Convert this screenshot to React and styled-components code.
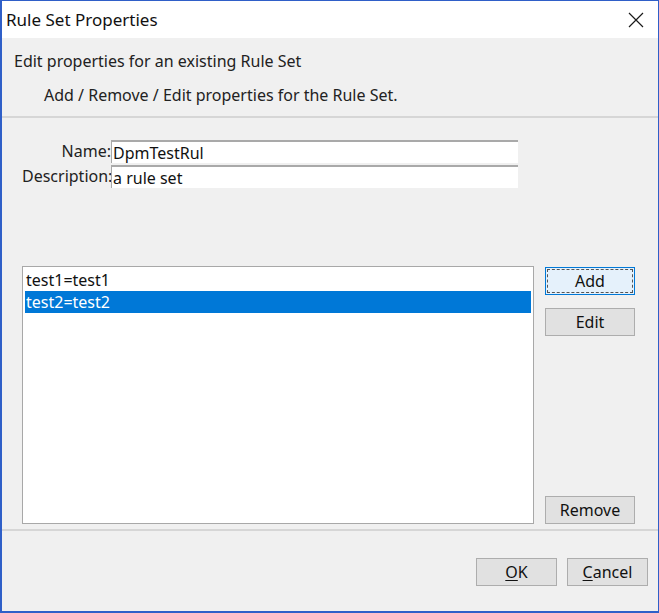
import React from "react";
import styled, { createGlobalStyle } from "styled-components";

const GlobalStyle = createGlobalStyle`
  html, body {
    margin: 0;
    padding: 0;
    background: #ffffff;
  }
  * {
    box-sizing: border-box;
  }
`;

const rules = [
  { id: 1, text: "test1=test1" },
  { id: 2, text: "test2=test2" },
];

function App() {
  return (
    <>
      <GlobalStyle />
      <Window>
        <TitleBar>
          <Title>Rule Set Properties</Title>
          <CloseBtn aria-label="close">
            <svg width="16" height="16" viewBox="0 0 16 16">
              <path d="M1 1 L15 15 M15 1 L1 15" stroke="#1a1a1a" strokeWidth="1.2" fill="none" />
            </svg>
          </CloseBtn>
        </TitleBar>

        <Header>
          <HeadLine>Edit properties for an existing Rule Set</HeadLine>
          <SubLine>Add / Remove / Edit properties for the Rule Set.</SubLine>
        </Header>

        <Main>
          <Form>
            <Label>Name:</Label>
            <Field defaultValue="DpmTestRul" />
            <Label>Description:</Label>
            <Field defaultValue="a rule set" />
          </Form>

          <ListArea>
            <ListBox>
              {rules.map((r) => (
                <ListItem key={r.id} selected={r.id === 2}>
                  {r.text}
                </ListItem>
              ))}
            </ListBox>
            <SideButtons>
              <Button focused>Add</Button>
              <Button>Edit</Button>
              <Spacer />
              <Button>Remove</Button>
            </SideButtons>
          </ListArea>
        </Main>

        <Footer>
          <Button wide>
            <u>O</u>K
          </Button>
          <Button wide>
            <u>C</u>ancel
          </Button>
        </Footer>
      </Window>
    </>
  );
}

export default App;

const Window = styled.div`
  width: 659px;
  height: 613px;
  display: flex;
  flex-direction: column;
  border: 1px solid #2f5fc8;
  border-left-width: 2px;
  border-bottom-width: 2px;
  background: #f0f0f0;
  font-family: "Noto Sans", "Open Sans", sans-serif;
  font-size: 16px;
  color: #222;
`;

const TitleBar = styled.div`
  height: 37px;
  display: flex;
  align-items: center;
  justify-content: space-between;
  background: #ffffff;
  padding-left: 4px;
  padding-right: 12px;
`;

const Title = styled.div`
  font-size: 17px;
  color: #111;
`;

const CloseBtn = styled.div`
  width: 20px;
  height: 20px;
  display: flex;
  align-items: center;
  justify-content: center;
`;

const Header = styled.div`
  height: 80px;
  padding: 11px 0 0 12px;
  border-bottom: 2px solid #d6d6d6;
`;

const HeadLine = styled.div`
  line-height: 24px;
`;

const SubLine = styled.div`
  line-height: 24px;
  margin-top: 10px;
  padding-left: 30px;
`;

const Main = styled.div`
  flex: 1;
  display: flex;
  flex-direction: column;
  padding: 22px 0 0 20px;
  border-bottom: 2px solid #d6d6d6;
`;

const Form = styled.div`
  display: grid;
  grid-template-columns: 89px 407px;
  row-gap: 2px;
  align-items: center;
`;

const Label = styled.div`
  text-align: right;
  line-height: 23px;
`;

const Field = styled.input`
  height: 23px;
  padding: 0 1px;
  border: none;
  border-top: 2px solid #a9a9a9;
  border-left: 1px solid #a9a9a9;
  background: #ffffff;
  font: inherit;
  color: #111;
  outline: none;
`;

const ListArea = styled.div`
  display: flex;
  gap: 11px;
  margin-top: 78px;
  height: 258px;
`;

const ListBox = styled.div`
  width: 512px;
  height: 258px;
  border: 1px solid #a8a8a8;
  background: #ffffff;
  padding: 2px;
`;

const ListItem = styled.div`
  height: 22px;
  line-height: 22px;
  padding-left: 1px;
  background: ${(p) => (p.selected ? "#0078d7" : "transparent")};
  color: ${(p) => (p.selected ? "#ffffff" : "#111")};
`;

const SideButtons = styled.div`
  display: flex;
  flex-direction: column;
  gap: 13px;
  padding-top: 1px;
`;

const Spacer = styled.div`
  flex: 1;
`;

const Button = styled.div`
  width: ${(p) => (p.wide ? "81px" : "90px")};
  height: 28px;
  display: flex;
  align-items: center;
  justify-content: center;
  background: ${(p) => (p.focused ? "#e5f1fb" : "#e1e1e1")};
  border: 1px solid ${(p) => (p.focused ? "#0078d7" : "#adadad")};
  outline: ${(p) => (p.focused ? "1px dashed #555" : "none")};
  outline-offset: -3px;
  color: #111;
  u {
    text-decoration-thickness: 1px;
    text-underline-offset: 2px;
  }
`;

const Footer = styled.div`
  flex: 0 0 80px;
  display: flex;
  justify-content: flex-end;
  gap: 10px;
  padding: 27px 10px 0 0;
`;
